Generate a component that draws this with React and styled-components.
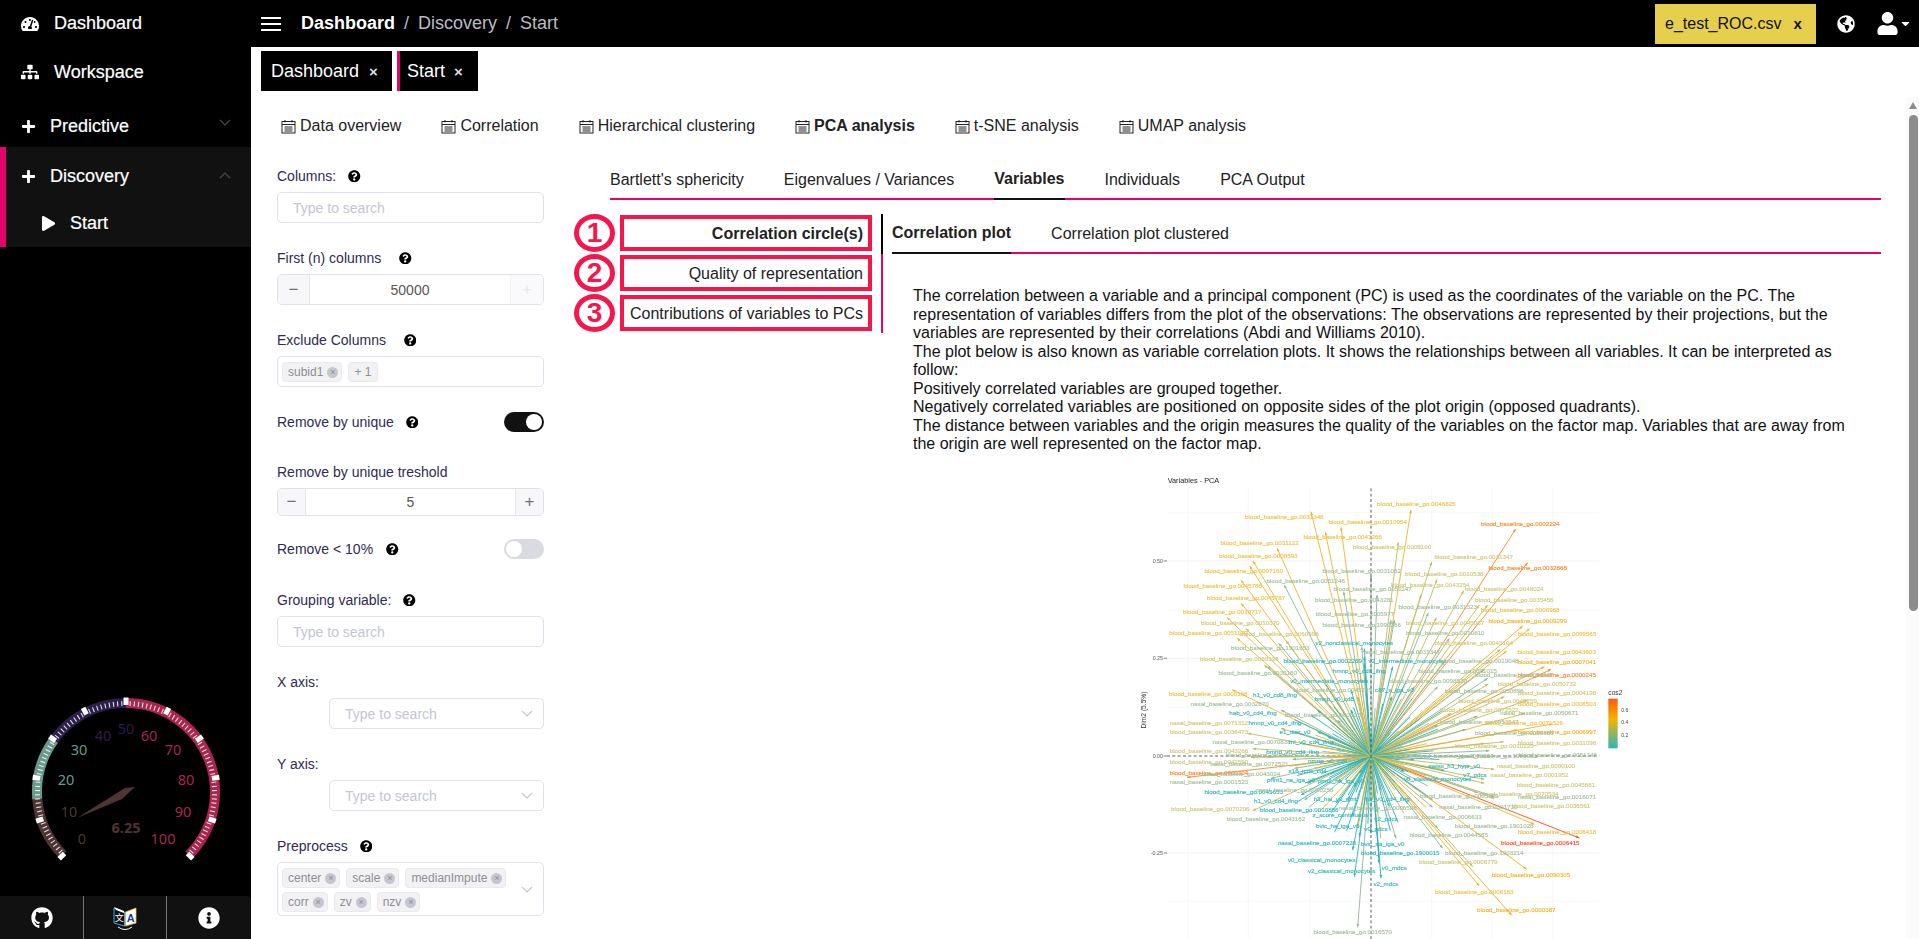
import React from 'react';
import styled, { createGlobalStyle } from 'styled-components';
import { FaTachometerAlt, FaSitemap, FaPlus, FaPlay, FaGithub, FaInfoCircle, FaQuestionCircle, FaGlobeAmericas, FaUser, FaCaretDown } from 'react-icons/fa';

const PINK = '#e0046c';
const RED = '#f5174b';

const Global = createGlobalStyle`
  html, body { margin: 0; padding: 0; height: 100%; overflow: hidden; background: #fff; }
  body { font-family: "Liberation Sans", Arial, sans-serif; }
  * { box-sizing: border-box; }
`;

const Shell = styled.div`display: flex; width: 1919px; height: 939px; overflow: hidden;`;
const Sidebar = styled.aside`width: 251px; flex: none; height: 939px; background: #000; color: #fff; display: flex; flex-direction: column;`;
const NavItem = styled.div`
  height: ${p => p.$h}px; padding: ${p => p.$pt || 0}px 0 0 ${p => p.$pl}px;
  display: flex; align-items: center; font-size: 18px; color: #fff; position: relative; -webkit-text-stroke: 0.2px #fff;
`;
const NavIcon = styled.span`display: inline-flex; width: ${p => p.$w}px; font-size: ${p => p.$s || 16}px; align-items: center;`;
const NavChevron = styled.svg`position: absolute; left: ${p => p.$left ?? 218}px; top: ${p => p.$top}px; width: 14px; height: 8px; fill: none; stroke: #4a4a4a; stroke-width: 1.2;`;
const NavGroup = styled.div`background: #111; border-left: 6px solid ${PINK}; height: 100px;`;
const GaugeWrap = styled.div`margin-top: auto; height: 206px; display: flex; align-items: flex-start;`;
const SideFoot = styled.div`height: 43px; background: #111; border-radius: 0 4px 0 0; display: grid; grid-template-columns: 83px 83px 85px;`;
const FootCell = styled.div`display: flex; align-items: center; justify-content: center; font-size: 22px; color: #fff; border-left: ${p => p.$sep ? '1px solid #777' : 'none'};`;

const Main = styled.main`flex: 1; min-width: 0; height: 939px; position: relative; display: flex; flex-direction: column; overflow: hidden;`;
const Topbar = styled.header`height: 47px; flex: none; background: #000; color: #fff; display: flex; align-items: center; padding-left: 10px;`;
const Burger = styled.div`width: 20px; height: 14px; border-top: 2px solid #fff; border-bottom: 2px solid #fff; position: relative; margin-right: 20px;
  &::after { content: ''; position: absolute; left: 0; right: 0; top: 4px; height: 2px; background: #fff; }`;
const Crumb = styled.span`font-size: 18px; color: ${p => p.$on ? '#fff' : '#b8bcc4'}; font-weight: ${p => p.$on ? 700 : 400};`;
const CrumbSep = styled.span`font-size: 18px; color: #b8bcc4; margin: 0 9px;`;
const TopRight = styled.div`margin-left: auto; display: flex; align-items: center; height: 47px;`;
const FileBadge = styled.div`width: 161px; height: 40px; background: #e5cf4c; color: #111; display: flex; align-items: center; padding-left: 10px; font-size: 16px; margin-right: 21px;`;
const FileClose = styled.b`margin-left: 12px; font-size: 15px;`;
const TopIcon = styled.span`display: inline-flex; font-size: ${p => p.$s}px; margin-right: ${p => p.$mr}px; color: #fff; align-items: center;`;

const TabStrip = styled.div`display: flex; gap: 5px; padding: 4px 0 0 10px; flex: none; height: 44px;`;
const PageTab = styled.div`height: 40px; background: #000; color: #fff; display: flex; align-items: center; font-size: 18px; width: ${p => p.$w}px;
  padding-left: ${p => p.$pink ? 7 : 10}px; border-left: ${p => p.$pink ? `3px solid ${PINK}` : 'none'};`;
const TabClose = styled.span`font-size: 15px; font-weight: 700; margin-left: ${p => p.$ml}px; color: #ddd;`;

const SubTabs = styled.nav`display: flex; height: 34px; margin-top: 18px; padding-left: 30px; flex: none;`;
const SubTab = styled.div`display: flex; align-items: center; gap: 4px; font-size: 16px; color: #222; margin-right: 40px; font-weight: ${p => p.$on ? 700 : 400};`;
const Body = styled.div`display: flex; flex: 1; min-height: 0; padding-top: 23px;`;
const Form = styled.div`width: 267px; margin-left: 26px; flex: none;`;
const Field = styled.div`margin-bottom: ${p => p.$gap ?? 25}px;`;
const Label = styled.div`height: 20px; font-size: 14px; line-height: 20px; color: #2f2b52; display: flex; align-items: center; margin-bottom: 6px;`;
const RowField = styled.div`height: 20px; font-size: 14px; color: #2f2b52; display: flex; align-items: center; margin-bottom: ${p => p.$gap}px;`;
const Help = styled.span`display: inline-flex; font-size: 12.5px; color: #000; margin-left: ${p => p.$ml ?? 18}px;`;
const Input = styled.div`height: 31px; border: 1px solid #e0e1ea; border-radius: 5px; color: #c4c6d0; font-size: 14px; display: flex; align-items: center; padding-left: 15px; background: #fff;`;
const SelectBox = styled(Input)`margin-left: ${p => p.$ml || 0}px; position: relative;`;
const Chevron = styled.svg`position: absolute; right: 10px; top: ${p => p.$top ?? 11}px; width: 12px; height: 8px; fill: none; stroke: #c4c6d0; stroke-width: 1.1;`;
const Stepper = styled.div`height: ${p => p.$h}px; border: 1px solid #e0e1ea; border-radius: 5px; display: flex; overflow: hidden; font-size: 14px; color: #575757;`;
const StepBtn = styled.div`width: ${p => p.$w}px; background: ${p => p.$off ? '#fafafc' : '#f7f7fa'}; color: ${p => p.$off ? '#e8e8ee' : '#70707a'}; display: flex; align-items: center; justify-content: center; font-size: 17px;
  border-${p => p.$right ? 'left' : 'right'}: 1px solid ${p => p.$off ? '#f2f2f5' : '#e5e5ea'};`;
const StepVal = styled.div`flex: 1; display: flex; align-items: center; justify-content: center;`;
const Tags = styled.div`min-height: ${p => p.$h}px; border: 1px solid #e0e1ea; border-radius: 5px; padding: 5px 30px 0 4px; display: flex; flex-wrap: wrap; gap: 4px 6px; position: relative; align-content: flex-start;`;
const Tag = styled.span`height: 20px; border: 1px solid #eaeaee; border-radius: 4px; background: #f2f2f5; color: #8e8e93; font-size: 12px; display: inline-flex; align-items: center; padding: 0 ${p => p.$plain ? 6 : 3}px 0 5px; gap: 4px;`;
const TagX = styled.span`width: 11px; height: 11px; border-radius: 50%; background: #c5c6d0; color: #8e8e93; font-size: 9px; line-height: 11px; text-align: center;`;
const Switch = styled.div`margin-left: auto; width: 40px; height: 20px; border-radius: 10px; background: ${p => p.$on ? '#111' : '#d9dae2'}; position: relative;
  &::after { content: ''; position: absolute; top: 2px; ${p => p.$on ? 'right: 2px' : 'left: 2px'}; width: 16px; height: 16px; border-radius: 50%; background: #fff; }`;

const Right = styled.section`width: 1271px; margin-left: 66px; flex: none; margin-top: -6px;`;
const TabLine = styled.div`display: flex; height: ${p => p.$h}px; border-bottom: 2px solid ${PINK};`;
const LineTab = styled.div`font-size: 16px; color: #222; height: calc(100% + 2px); display: flex; align-items: center; margin-right: ${p => p.$mr ?? 40}px;
  ${p => p.$on && `font-weight: 700; border-bottom: 2px solid #111;`}`;
const Split = styled.div`display: flex; margin-top: 14px;`;
const VTabs = styled.div`width: 273px; height: 119px; padding: 1px 0 0 10px; flex: none; display: flex; flex-direction: column; gap: 4px; border-right: 2px solid ${PINK}; position: relative;
  &::after { content: ''; position: absolute; right: -2px; top: 0; width: 2px; height: 40px; background: #000; }`;
const VBox = styled.div`height: 36px; width: 252px; flex: none; border: 4px solid ${RED}; font-size: 16px; color: #222; display: flex; align-items: center; justify-content: flex-end; padding: 1px 5px 0 0; position: relative; font-weight: ${p => p.$on ? 700 : 400}; white-space: nowrap;`;
const VNum = styled.span`position: absolute; left: -50px; top: -5px; width: 41px; height: 38px; border: 5px solid ${RED}; border-radius: 50%; color: ${RED}; font-size: 28px; font-weight: 700; display: flex; align-items: center; justify-content: center;`;
const Content = styled.div`flex: 1; margin-left: 9px; min-width: 0;`;
const Para = styled.p`margin: 33px 0 0 21px; width: 935px; font-size: 16px; line-height: 18.5px; color: #111;`;
const PlotHolder = styled.div`margin: 16px 0 0 239px;`;
const PlotSvg = styled.svg`display: block; width: 520px; height: 469px; filter: blur(0.35px);`;
const ScrollTrack = styled.div`position: absolute; right: 0; top: 97px; bottom: 0; width: 13px; background: #fbfbfb;`;
const ScrollArrow = styled.div`position: absolute; left: 3px; top: 5px; width: 0; height: 0; border-left: 4.5px solid transparent; border-right: 4.5px solid transparent; border-bottom: 7px solid #8c8c8c;`;
const ScrollThumb = styled.div`position: absolute; left: 3px; top: 18px; width: 9px; height: 496px; background: #8c8c8c; border-radius: 5px;`;

const CalendarIcon = () => (
  <svg width="15" height="15" viewBox="0 0 15 15" fill="none" stroke="#222" strokeWidth="1">
    <rect x="1" y="2.5" width="13" height="11.5" />
    <path d="M1 5.5h13M4 1v2.5M11 1v2.5M3.5 8h8M3.5 10h8M3.5 12h8" />
  </svg>
);

const TranslateIcon = () => (
  <svg width="24" height="26" viewBox="0 0 24 26">
    <path d="M1 3 L11.5 7 V21 L1 18 Z" fill="#111" stroke="#3aa6e8" strokeWidth="1" />
    <path d="M1 2 L11 6 L11 8 L3 5Z" fill="#fff" />
    <path d="M12.5 7 L23 3 V18 L12.5 21 Z" fill="#fff" stroke="#e8b03a" strokeWidth="0.8" />
    <text x="17.7" y="17" textAnchor="middle" fontSize="11" fontWeight="700" fill="#1d3f8c" fontFamily="Liberation Sans">A</text>
    <text x="6.3" y="16" textAnchor="middle" fontSize="9" fill="#fff" fontFamily="Noto Sans CJK SC">文</text>
    <path d="M5 22 Q12 27 19 22" fill="none" stroke="#fff" strokeWidth="1" />
  </svg>
);

const polar = (cx, cy, r, v) => {
  const a = ((-135 + v * 2.7) * Math.PI) / 180;
  return [cx + r * Math.sin(a), cy - r * Math.cos(a)];
};
const arc = (cx, cy, r, a, b) => {
  const [x1, y1] = polar(cx, cy, r, a);
  const [x2, y2] = polar(cx, cy, r, b);
  return `M${x1} ${y1}A${r} ${r} 0 ${(b - a) * 2.7 > 180 ? 1 : 0} 1 ${x2} ${y2}`;
};
const G = { brown: '#4e3533', green: '#6a9a8c', purple: '#2d1f4a', red: '#a92650' };
const segs = [[0, 15, G.brown], [15, 30, G.green], [30, 50, G.purple], [50, 100, G.red]];
const gaugeLabels = [
  [0, 82, 839, G.brown], [10, 69, 812, G.brown], [20, 66, 780, G.green], [30, 79, 750, G.green], [40, 103, 736, G.purple],
  [50, 126, 729, G.purple], [60, 149, 736, G.red], [70, 173, 750, G.red], [80, 186, 780, G.red], [90, 183, 812, G.red], [100, 163, 839, G.red],
];
const Gauge = () => {
  const cx = 126, cy = 792 - 690;
  const ticks = [];
  for (let v = 0; v <= 100; v += 1) {
    const major = v % 10 === 0;
    const [x1, y1] = polar(cx, cy, major ? 87 : 86, v);
    const [x2, y2] = polar(cx, cy, major ? 94.5 : 91, v);
    ticks.push(<line key={v} x1={x1} y1={y1} x2={x2} y2={y2} stroke="#fff" strokeWidth={major ? 5 : 1.1} opacity={major ? 1 : 0.85} />);
  }
  return (
    <svg width="251" height="206" viewBox="0 0 251 206">
      {segs.map(([a, b, c]) => <path key={a} d={arc(cx, cy, 89, a, b)} fill="none" stroke={c} strokeWidth="10" />)}
      {ticks}
      {gaugeLabels.map(([t, x, y, c]) => <text key={t} x={x} y={y - 690 + 5} textAnchor="middle" fontSize="14.5" fill={c} fontFamily="Noto Sans">{t}</text>)}
      <text x="126" y={828 - 690 + 5} textAnchor="middle" fontSize="14.5" fontWeight="700" fill={G.brown} fontFamily="Noto Sans">6.25</text>
      <polygon points={`77,${818 - 690} 125,${788 - 690} 135,${787 - 690} 122,${799 - 690}`} fill={G.brown} />
    </svg>
  );
};

/* Plot data: [name, centre x, text y, tier, tip x, tip y] in 1/3-pixel units */
const B = 'blood_baseline_go.', N = 'nasal_baseline_go.';
const Y7 = 690;
const raw = [
  [B+'0031348',400,140,3,480,125],[B+'0046825',796,103,3,780,120],[B+'0010954',650,157,3,570,172],[B+'0043266',575,202,3,523,186],
  [B+'0009100',723,232,2,742,217],[B+'0002224',1108,161,5,1094,177],[B+'0031122',326,218,3,378,234],[B+'0008593',322,258,3,306,273],
  [B+'0031347',968,260,2,842,276],[B+'0032868',1130,295,5,1130,278],[B+'0007160',278,304,3,296,288],[B+'0031062',632,302,1,660,318],
  [B+'0010538',880,311,2,858,328],[B+'0051246',464,332,1,400,345],[B+'0045786',215,347,3,270,330],[B+'0043254',838,344,2,810,375],
  [B+'0051147',665,358,1,678,375],[B+'0048024',1060,358,2,938,362],[B+'0045787',285,383,3,270,400],[B+'0043281',610,390,1,578,365],
  [B+'0035456',1090,389,2,1010,405],[B+'0031323',860,411,1,832,428],[B+'0010717',214,427,3,228,442],[B+'2005977',612,431,1,730,450],
  [B+'0006968',1108,421,3,985,405],[B+'0010370',268,459,2,285,476],[B+'1990266',632,464,1,720,450],[B+'0045087',882,459,2,856,443],
  [B+'0009299',1130,453,4,1115,468],[B+'0051179',172,488,3,258,504],[B+'0060998',385,491,2,405,512],[B+'0010810',883,488,1,895,505],
  [B+'0099565',1218,492,3,1136,476],['v2_nonclassical_monocytes',610,518,0,640,536],[B+'1901653',358,535,1,383,520],[B+'0043104',968,520,2,1048,538],
  [N+'0031347',750,545,1,632,530],[B+'0043603',1217,545,3,1067,543],[B+'0060326',265,566,2,340,585],[B+'0002269',515,574,0,640,560],
  ['v2_intermediate_monocytes',770,574,0,725,590],[B+'0019048',985,574,1,880,576],[B+'0007041',1217,575,4,1180,590],['hmnp_v0_cd8_ifng',625,602,0,640,580],
  [B+'0030160',320,608,1,350,590],[B+'0031015',920,602,1,1000,598],[B+'0000245',1217,614,5,1200,598],[B+'0051607',1090,614,1,1010,625],
  ['v0_intermediate_monocytes',535,632,0,600,660],[B+'0098530',830,632,1,790,650],[B+'0050732',1158,642,2,1012,642],[B+'0045255',545,660,1,620,680],
  ['c87_s_iga_v0',730,660,0,722,680],[B+'0050856',1000,662,1,860,650],[B+'0004198',1218,670,2,1060,680],[B+'0000166',172,673,3,243,659],
  ['h1_v0_cd8_ifng',372,675,0,500,720],['bmnp_v0_cd8',550,688,0,600,720],[B+'0045259',1040,694,2,1130,690],[B+'0006503',1218,702,3,1120,730],
  [N+'0032670',236,702,1,390,720],
  ['hab_v0_cd4_ifng',306,40+Y7,0,480,45+Y7],[B+'0005070',520,44+Y7,1,560,60+Y7],[N+'0050671',1165,40+Y7,1,980,48+Y7],[B+'0072522',985,30+Y7,2,900,40+Y7],
  [N+'0071312',174,68+Y7,2,390,85+Y7],['hmnp_v0_cd4_ifng',372,68+Y7,0,500,95+Y7],[B+'0053547',985,65+Y7,1,860,75+Y7],[B+'0071526',1118,68+Y7,3,1205,72+Y7],
  [B+'0036473',174,97+Y7,2,290,100+Y7],['e1_titer_v0',432,96+Y7,0,530,110+Y7],[B+'0006997',1218,97+Y7,4,1100,90+Y7],[B+'0060386',1090,100+Y7,1,945,88+Y7],
  [N+'0070838',302,125+Y7,1,450,130+Y7],['ml_v0_cd4_ifng',480,127+Y7,0,540,125+Y7],[B+'0031098',1218,128+Y7,2,1000,130+Y7],[B+'0010225',1030,137+Y7,2,1058,125+Y7],
  [B+'0043266',174,152+Y7,2,305,146+Y7],['bmnp_v0_cd4_ifng',425,155+Y7,0,560,150+Y7],[B+'0042590',342,165+Y7,1,300,170+Y7],[B+'0051346',1220,165+Y7,1,1015,152+Y7],
  [B+'0070884',910,168+Y7,1,800,165+Y7],[B+'1900082',1040,168+Y7,1,960,170+Y7],[B+'0042590',174,185+Y7,2,300,172+Y7],[N+'0072521',295,191+Y7,1,425,178+Y7],
  ['nmnp_v0_cd8',530,183+Y7,0,600,175+Y7],['swiss_h3_hypr_v0',910,197+Y7,0,790,180+Y7],[N+'0090100',1155,197+Y7,2,1030,208+Y7],[B+'0000304',174,218+Y7,5,108,232+Y7],
  [B+'0043024',270,222+Y7,1,430,205+Y7],['z16_icos_cd4',470,212+Y7,0,590,195+Y7],[N+'0001952',1135,225+Y7,2,1000,238+Y7],['v7_pdcs',972,225+Y7,0,880,212+Y7],
  [N+'0001523',174,247+Y7,1,360,235+Y7],['print1_na_iga_v0',420,240+Y7,0,540,220+Y7],['pmt1_ha_iga_v0',570,242+Y7,0,625,220+Y7],['v0_classical_monocytes',860,238+Y7,0,760,215+Y7],
  [B+'0045661',1215,254+Y7,2,1000,250+Y7],[B+'0045653',278,275+Y7,0,470,250+Y7],[N+'0010256',430,270+Y7,1,560,245+Y7],[B+'0070534',1105,282+Y7,2,980,278+Y7],
  [N+'0016071',1218,291+Y7,1,1030,290+Y7],['h1_v0_cd4_ifng',375,302+Y7,0,450,285+Y7],['h3_hai_v0_gmt',552,297+Y7,0,610,262+Y7],['h3_v0_cd4_ifng',710,296+Y7,0,690,270+Y7],
  [B+'0005125',925,288+Y7,1,800,270+Y7],[B+'0070206',178,328+Y7,2,305,332+Y7],[B+'0010856',445,330+Y7,0,555,310+Y7],[N+'0006508',680,325+Y7,1,672,300+Y7],
  [N+'0001730',982,322+Y7,1,845,300+Y7],[B+'0036561',1200,319+Y7,2,1030,295+Y7],[B+'0043162',345,357+Y7,1,460,300+Y7],['z_score_continuous',568,346+Y7,0,590,300+Y7],
  ['v2_pdcs',705,358+Y7,0,715,320+Y7],[N+'0006633',875,351+Y7,1,845,322+Y7],['bvic_ha_iga_v0',560,377+Y7,0,605,350+Y7],['v0_pdcs',675,387+Y7,0,680,340+Y7],
  [B+'1901028',1030,379+Y7,1,860,385+Y7],[B+'0006418',1218,397+Y7,3,1150,373+Y7],[B+'0044565',893,406+Y7,1,735,415+Y7],[B+'0006415',1168,428+Y7,6,1285,414+Y7],
  [N+'0007228',498,430+Y7,0,625,410+Y7],['bvic_na_iga_v0',695,431+Y7,0,660,400+Y7],[B+'1900015',748,459+Y7,0,685,490+Y7],[B+'1903214',1000,459+Y7,1,875,445+Y7],
  ['v0_classical_monocytes',512,479+Y7,0,605,450+Y7],[B+'0006779',922,487+Y7,2,965,500+Y7],['v0_mdcs',730,504+Y7,0,685,490+Y7],['v2_classical_monocytes',572,513+Y7,0,610,530+Y7],
  [B+'0090305',1140,524+Y7,4,1127,508+Y7],['v2_mdcs',705,551+Y7,0,690,535+Y7],[B+'0006163',970,575+Y7,3,985,558+Y7],[B+'0000387',1096,631+Y7,4,1082,646+Y7],
  [B+'0016570',605,697+Y7,1,620,682+Y7],
];
const TIER = ['#2fb5b8', '#a3bf9a', '#cfc878', '#eec24a', '#f4b026', '#f98a2c', '#ff4f1f'];
const ARROW = ['#2fb5b8', '#8fb89a', '#c2bd62', '#efb72e', '#f4ac1c', '#f98a2c', '#ff4f1f'];
const OX = 660, OY = 858;
const head = (x, y) => {
  const a = Math.atan2(y - OY, x - OX), s = 10, w = 4;
  const bx = x - s * Math.cos(a), by = y - s * Math.sin(a);
  return `${x},${y} ${bx - w * Math.sin(a)},${by + w * Math.cos(a)} ${bx + w * Math.sin(a)},${by - w * Math.cos(a)}`;
};
const hubTiers = [0, 0, 1, 0, 3, 0, 2, 0, 3];
const hubArrows = Array.from({ length: 90 }, (_, i) => {
  const a = i * 2.39996, r = 70 + ((i * 37) % 190);
  return [OX + r * Math.cos(a), OY + r * Math.sin(a), hubTiers[i % hubTiers.length]];
});
const gridH = [128, 420, 712, 1003, 1294];
const gridHM = [273, 565, 1149];
const gridV = [110, 292, 476, 842, 1024, 1205];
const ticksY = [['0.50', 273], ['0.25', 565], ['0.00', 858], ['-0.25', 1149]];

const Plot = () => (
  <PlotSvg viewBox="-60 0 1560 1407" fontFamily="Liberation Sans">
    <defs>
      <linearGradient id="cos" x1="0" y1="0" x2="0" y2="1">
        <stop offset="0" stopColor="#ff5a0a" />
        <stop offset="0.42" stopColor="#f0b400" />
        <stop offset="1" stopColor="#2eb5bd" />
      </linearGradient>
    </defs>
    {gridH.map(y => <line key={y} x1="48" x2="1345" y1={y} y2={y} stroke="#f6f6f6" strokeWidth="2" />)}
    {gridHM.map(y => <line key={y} x1="48" x2="1345" y1={y} y2={y} stroke="#eee" strokeWidth="2.4" />)}
    {gridV.map(x => <line key={x} x1={x} x2={x} y1="55" y2="1407" stroke="#f4f4f4" strokeWidth="2" />)}
    <text x="50" y="38" fontSize="22" fill="#222">Variables - PCA</text>
    <text transform="translate(-14 720) rotate(-90)" textAnchor="middle" fontSize="20" fill="#333">Dim2 (5.5%)</text>
    {ticksY.map(([t, y]) => <g key={t}><text x="36" y={y + 6} textAnchor="end" fontSize="16" fill="#555">{t}</text><line x1="38" x2="48" y1={y} y2={y} stroke="#444" strokeWidth="2" /></g>)}
    <line x1="48" x2="1345" y1={OY} y2={OY} stroke="#444" strokeWidth="2.6" strokeDasharray="9 7" />
    {raw.map(([n, cx, y, tier, tx, ty], i) => (
      <g key={i}>
        <line x1={OX} y1={OY} x2={tx} y2={ty} stroke={ARROW[tier]} strokeWidth="2.8" />
        <polygon points={head(tx, ty)} fill={ARROW[tier]} />
      </g>
    ))}
    {hubArrows.map(([x, y, t], i) => <line key={i} x1={OX} y1={OY} x2={x} y2={y} stroke={ARROW[t]} strokeWidth="2.8" />)}
    <line x1={OX} x2={OX} y1="55" y2="1407" stroke="#444" strokeWidth="2.6" strokeDasharray="9 7" />
    {raw.map(([n, cx, y, tier], i) => (
      <text key={i} x={cx} y={y + 6} textAnchor="middle" fontSize="18.8" fill={TIER[tier]} stroke={TIER[tier]} strokeWidth="0.4">{n}</text>
    ))}
    <text x="1372" y="674" fontSize="20" fill="#333">cos2</text>
    <rect x="1372" y="686" width="28" height="149" fill="url(#cos)" />
    {[['0.6', 721], ['0.4', 758], ['0.2', 797]].map(([t, y]) => <text key={t} x="1411" y={y + 5} fontSize="15" fill="#444">{t}</text>)}
  </PlotSvg>
);

const Q = ({ ml }) => <Help $ml={ml}><FaQuestionCircle /></Help>;
const ChevronPath = () => <path d="M1 1 L6 6 L11 1" />;
const X = () => <TagX>×</TagX>;

export default function App() {
  return (
    <>
      <Global />
      <Shell>
        <Sidebar>
          <NavItem $h={47} $pl={21}><NavIcon $w={33} $s={18}><FaTachometerAlt /></NavIcon>Dashboard</NavItem>
          <NavItem $h={50} $pl={21}><NavIcon $w={33} $s={18}><FaSitemap /></NavIcon>Workspace</NavItem>
          <NavItem $h={50} $pt={8} $pl={21}>
            <NavIcon $w={29} $s={15}><FaPlus /></NavIcon>Predictive
            <NavChevron $top={22} viewBox="0 0 14 8"><path d="M2 1 L7 6 L12 1" /></NavChevron>
          </NavItem>
          <NavGroup>
            <NavItem $h={58} $pl={15}>
              <NavIcon $w={29} $s={15}><FaPlus /></NavIcon>Discovery
              <NavChevron $left={212} $top={24} viewBox="0 0 14 8"><path d="M2 7 L7 2 L12 7" /></NavChevron>
            </NavItem>
            <NavItem $h={36} $pl={35}><NavIcon $w={29} $s={15}><FaPlay /></NavIcon>Start</NavItem>
          </NavGroup>
          <GaugeWrap><Gauge /></GaugeWrap>
          <SideFoot>
            <FootCell><FaGithub /></FootCell>
            <FootCell $sep><TranslateIcon /></FootCell>
            <FootCell $sep><FaInfoCircle /></FootCell>
          </SideFoot>
        </Sidebar>
        <Main>
          <Topbar>
            <Burger />
            <Crumb $on>Dashboard</Crumb><CrumbSep>/</CrumbSep><Crumb>Discovery</Crumb><CrumbSep>/</CrumbSep><Crumb>Start</Crumb>
            <TopRight>
              <FileBadge>e_test_ROC.csv<FileClose>x</FileClose></FileBadge>
              <TopIcon $s={18} $mr={21}><FaGlobeAmericas /></TopIcon>
              <TopIcon $s={23} $mr={0}><FaUser /></TopIcon>
              <TopIcon $s={13} $mr={7}><FaCaretDown /></TopIcon>
            </TopRight>
          </Topbar>
          <TabStrip>
            <PageTab $w={131}>Dashboard<TabClose $ml={10}>×</TabClose></PageTab>
            <PageTab $w={81} $pink>Start<TabClose $ml={9}>×</TabClose></PageTab>
          </TabStrip>
          <SubTabs>
            {['Data overview', 'Correlation', 'Hierarchical clustering', 'PCA analysis', 't-SNE analysis', 'UMAP analysis'].map(t => (
              <SubTab key={t} $on={t === 'PCA analysis'}><CalendarIcon />{t}</SubTab>
            ))}
          </SubTabs>
          <Body>
            <Form>
              <Field><Label>Columns:<Q ml={12} /></Label><Input>Type to search</Input></Field>
              <Field>
                <Label>First (n) columns<Q /></Label>
                <Stepper $h={31}><StepBtn $w={32}>−</StepBtn><StepVal>50000</StepVal><StepBtn $w={33} $right $off>+</StepBtn></Stepper>
              </Field>
              <Field>
                <Label>Exclude Columns<Q /></Label>
                <Tags $h={31}><Tag>subid1<X /></Tag><Tag $plain>+ 1</Tag></Tags>
              </Field>
              <RowField $gap={30}>Remove by unique<Q ml={12} /><Switch $on /></RowField>
              <Field $gap={23}>
                <Label>Remove by unique treshold</Label>
                <Stepper $h={28}><StepBtn $w={28}>−</StepBtn><StepVal>5</StepVal><StepBtn $w={28} $right>+</StepBtn></Stepper>
              </Field>
              <RowField $gap={31}>Remove &lt; 10%<Q ml={13} /><Switch /></RowField>
              <Field><Label>Grouping variable:<Q ml={12} /></Label><Input>Type to search</Input></Field>
              <Field>
                <Label>X axis:</Label>
                <SelectBox $ml={52}>Type to search<Chevron viewBox="0 0 12 8"><ChevronPath /></Chevron></SelectBox>
              </Field>
              <Field>
                <Label>Y axis:</Label>
                <SelectBox $ml={52}>Type to search<Chevron viewBox="0 0 12 8"><ChevronPath /></Chevron></SelectBox>
              </Field>
              <Field>
                <Label>Preprocess<Q ml={12} /></Label>
                <Tags $h={54}>
                  <Tag>center<X /></Tag><Tag>scale<X /></Tag><Tag>medianImpute<X /></Tag>
                  <Tag>corr<X /></Tag><Tag>zv<X /></Tag><Tag>nzv<X /></Tag>
                  <Chevron $top={23} viewBox="0 0 12 8"><ChevronPath /></Chevron>
                </Tags>
              </Field>
            </Form>
            <Right>
              <TabLine $h={40}>
                <LineTab>Bartlett's sphericity</LineTab>
                <LineTab>Eigenvalues / Variances</LineTab>
                <LineTab $on>Variables</LineTab>
                <LineTab>Individuals</LineTab>
                <LineTab>PCA Output</LineTab>
              </TabLine>
              <Split>
                <VTabs>
                  <VBox $on><VNum>1</VNum>Correlation circle(s)</VBox>
                  <VBox><VNum>2</VNum>Quality of representation</VBox>
                  <VBox><VNum>3</VNum>Contributions of variables to PCs</VBox>
                </VTabs>
                <Content>
                  <TabLine $h={40}>
                    <LineTab $on>Correlation plot</LineTab>
                    <LineTab>Correlation plot clustered</LineTab>
                  </TabLine>
                  <Para>
                    The correlation between a variable and a principal component (PC) is used as the coordinates of the variable on the PC. The representation of variables differs from the plot of the observations: The observations are represented by their projections, but the variables are represented by their correlations (Abdi and Williams 2010).<br />
                    The plot below is also known as variable correlation plots. It shows the relationships between all variables. It can be interpreted as follow:<br />
                    Positively correlated variables are grouped together.<br />
                    Negatively correlated variables are positioned on opposite sides of the plot origin (opposed quadrants).<br />
                    The distance between variables and the origin measures the quality of the variables on the factor map. Variables that are away from the origin are well represented on the factor map.
                  </Para>
                  <PlotHolder><Plot /></PlotHolder>
                </Content>
              </Split>
            </Right>
          </Body>
          <ScrollTrack><ScrollArrow /><ScrollThumb /></ScrollTrack>
        </Main>
      </Shell>
    </>
  );
}
